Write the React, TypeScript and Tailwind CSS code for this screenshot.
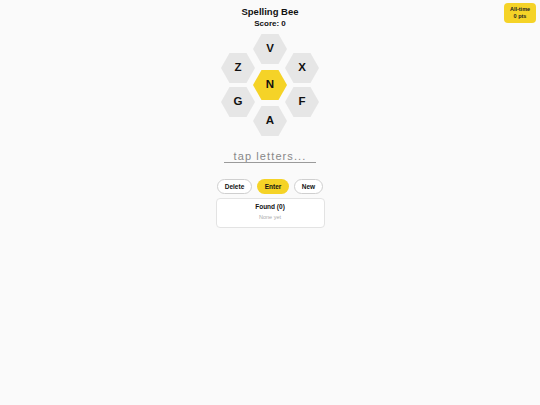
import { useState } from "react";

const hexClip =
  "[clip-path:polygon(25%_0,75%_0,100%_50%,75%_100%,25%_100%,0_50%)]";

function Hex({ letter, center, onTap }: { letter: string; center?: boolean; onTap: (l: string) => void }) {
  return (
    <button
      onClick={() => onTap(letter)}
      className={`w-[34px] h-[30px] flex items-center justify-center text-[11.5px] font-bold text-[#111] ${hexClip} ${
        center ? "bg-[#f5d327]" : "bg-[#e6e6e6]"
      }`}
    >
      {letter}
    </button>
  );
}

export default function App() {
  const [word, setWord] = useState("");
  const [found] = useState<string[]>([]);
  const tap = (l: string) => setWord((w) => w + l);

  return (
    <div className="min-h-screen bg-[#fafafa] flex flex-col items-center font-['Liberation_Sans',Arial,sans-serif] text-[#111] relative">
      {/* All-time badge */}
      <div className="absolute top-[3px] right-[4px] w-[32px] h-[20px] rounded-[4px] bg-[#f5d327] flex flex-col items-center justify-center text-[5.5px] font-bold leading-[7px] text-[#222]">
        <span>All-time</span>
        <span>0 pts</span>
      </div>

      {/* Header */}
      <h1 className="mt-[6px] text-[9.5px] leading-[12px] font-bold">Spelling Bee</h1>
      <div className="mt-[1px] text-[8px] leading-[10px] font-bold">Score: 0</div>

      {/* Hive */}
      <div className="mt-[5px] flex items-center">
        <div className="flex flex-col gap-[4px]">
          <Hex letter="Z" onTap={tap} />
          <Hex letter="G" onTap={tap} />
        </div>
        <div className="flex flex-col gap-[6px] -mx-[2px]">
          <Hex letter="V" onTap={tap} />
          <Hex letter="N" center onTap={tap} />
          <Hex letter="A" onTap={tap} />
        </div>
        <div className="flex flex-col gap-[4px]">
          <Hex letter="X" onTap={tap} />
          <Hex letter="F" onTap={tap} />
        </div>
      </div>

      {/* Input */}
      <input
        value={word}
        onChange={(e) => setWord(e.target.value.toUpperCase())}
        placeholder="tap letters..."
        className="mt-[13px] w-[92px] h-[14px] bg-transparent border-b border-[#9a9a9a] text-center text-[11px] leading-[14px] tracking-[1.1px] text-[#333] placeholder:text-[#888] outline-none"
      />

      {/* Buttons */}
      <div className="mt-[16px] flex items-center gap-[5px]">
        <button
          onClick={() => setWord((w) => w.slice(0, -1))}
          className="h-[15px] w-[35px] rounded-full border border-[#cfcfcf] bg-white text-[6.5px] font-bold"
        >
          Delete
        </button>
        <button className="h-[15px] w-[32px] rounded-full bg-[#f5d327] text-[6.5px] font-bold">Enter</button>
        <button
          onClick={() => setWord("")}
          className="h-[15px] w-[29px] rounded-full border border-[#cfcfcf] bg-white text-[6.5px] font-bold"
        >
          New
        </button>
      </div>

      {/* Found */}
      <div className="mt-[4px] w-[109px] h-[30px] rounded-[4px] border border-[#e3e3e3] bg-white flex flex-col items-center pt-[4px]">
        <div className="text-[6.5px] leading-[8px] font-bold text-[#111]">Found ({found.length})</div>
        <div className="mt-[3px] text-[5.5px] leading-[7px] text-[#aaa]">None yet</div>
      </div>
    </div>
  );
}
